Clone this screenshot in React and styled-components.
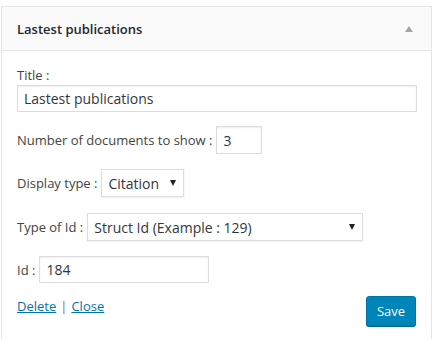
import React from 'react'
import styled, { createGlobalStyle } from 'styled-components'

const Global = createGlobalStyle`
body {
  margin: 0;
  background: #fff;
  font-family: "Open Sans", "Noto Sans", sans-serif;
  color: #32373c;
}
`

const Widget = styled.div`
margin: 6px 0 0 1px;
width: 431px;
box-sizing: border-box;
border: 1px solid #e5e5e5;
border-bottom: none;
height: 340px;
`

const Top = styled.div`
height: 43px;
background: #fafafa;
border-bottom: 1px solid #e5e5e5;
display: flex;
align-items: center;
justify-content: space-between;
padding: 0 18px 0 15px;
`

const Heading = styled.h3`
margin: 0;
font-size: 13px;
font-weight: 600;
color: #23282d;
`

const Arrow = styled.span`
width: 0;
height: 0;
border-left: 4px solid transparent;
border-right: 4px solid transparent;
border-bottom: 6px solid #a0a5aa;
margin-top: 1px;
`

const Inside = styled.div`
padding: 0 15px;
`

const Label = styled.label`
display: block;
font-size: 13px;
line-height: 18px;
color: #444;
margin-top: ${p => p.top || 0}px;
`

const Row = styled.div`
display: flex;
align-items: center;
margin-top: ${p => p.top || 0}px;
font-size: 13px;
color: #444;
`

const Text = styled.span`
margin-right: 4px;
white-space: nowrap;
`

const Input = styled.input`
box-sizing: border-box;
width: ${p => p.w}px;
height: ${p => p.h || 28}px;
margin: ${p => p.mt || 0}px 0 0 0;
border: 1px solid #ddd;
box-shadow: inset 0 1px 2px rgba(0,0,0,0.07);
padding: 0 6px;
font-family: inherit;
font-size: 14px;
color: #32373c;
outline: none;
`

const SelectWrap = styled.div`
position: relative;
width: ${p => p.w}px;
height: 28px;
`

const Select = styled.select`
appearance: none;
box-sizing: border-box;
width: 100%;
height: 100%;
border: 1px solid #ddd;
box-shadow: 0 1px 2px rgba(0,0,0,0.07);
background: #fff;
padding: 0 6px;
font-family: inherit;
font-size: 14px;
color: #32373c;
outline: none;
`

const Caret = styled.span`
position: absolute;
right: 8px;
top: 11px;
width: 0;
height: 0;
border-left: 3.5px solid transparent;
border-right: 3.5px solid transparent;
border-top: 6px solid #222;
pointer-events: none;
`

const Footer = styled.div`
display: flex;
justify-content: space-between;
align-items: flex-start;
margin-top: 14px;
`

const Links = styled.div`
font-size: 13px;
color: #72777c;
line-height: 18px;
`

const Link = styled.a`
color: #0073aa;
text-decoration: underline;
cursor: pointer;
`

const Sep = styled.span`
margin: 0 4px;
`

const SaveButton = styled.button`
box-sizing: border-box;
width: 50px;
height: 30px;
margin-top: -1px;
background: #0085ba;
border: 1px solid #0073aa;
border-radius: 3px;
box-shadow: 0 1px 0 #006799;
color: #fff;
font-family: inherit;
font-size: 13px;
padding: 0;
cursor: pointer;
`

const App = () => {
  return (
    <>
      <Global />
      <Widget>
        <Top>
          <Heading>Lastest publications</Heading>
          <Arrow />
        </Top>
        <Inside>
          <Label top={15}>Title :</Label>
          <Input w={400} h={27} mt={1} defaultValue="Lastest publications" />
          <Row top={14}>
            <Text>Number of documents to show :</Text>
            <Input w={46} defaultValue="3" />
          </Row>
          <Row top={15}>
            <Text>Display type :</Text>
            <SelectWrap w={83}>
              <Select defaultValue="citation">
                <option value="citation">Citation</option>
              </Select>
              <Caret />
            </SelectWrap>
          </Row>
          <Row top={16}>
            <Text>Type of Id :</Text>
            <SelectWrap w={276}>
              <Select defaultValue="struct">
                <option value="struct">Struct Id (Example : 129)</option>
              </Select>
              <Caret />
            </SelectWrap>
          </Row>
          <Row top={15}>
            <Text>Id :</Text>
            <Input w={170} h={27} defaultValue="184" />
          </Row>
          <Footer>
            <Links>
              <Link>Delete</Link>
              <Sep>|</Sep>
              <Link>Close</Link>
            </Links>
            <SaveButton>Save</SaveButton>
          </Footer>
        </Inside>
      </Widget>
    </>
  )
}

export default App
